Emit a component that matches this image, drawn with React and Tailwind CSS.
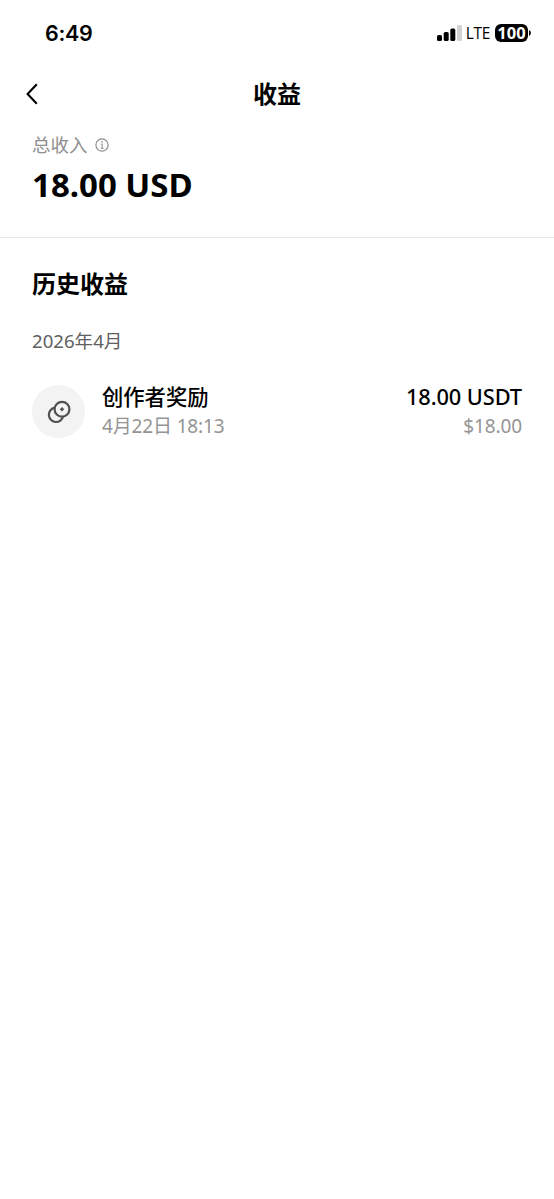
function StatusBar() {
  return (
    <div className="flex h-[66px] items-center justify-between pr-[22px] pl-[45px] font-['Inter',sans-serif]">
      <span className="pt-[2px] text-[21.5px] leading-none font-semibold tracking-[-0.3px]">6:49</span>
      <div className="flex items-center">
        <svg width="25" height="16" viewBox="0 0 25 16" className="mr-[4px]">
          <rect x="0" y="10" width="5" height="6" rx="1.6" />
          <rect x="6.7" y="7" width="5" height="9" rx="1.6" />
          <rect x="13.3" y="3.5" width="5" height="12.5" rx="1.6" />
          <rect x="20" y="0" width="5" height="16" rx="1.6" fill="#d2d2d2" />
        </svg>
        <span className="mr-[5px] pt-[2px] font-['Open_Sans',sans-serif] text-[15.5px] leading-none font-medium tracking-[-0.3px]">LTE</span>
        <span className="flex h-[18px] w-[33px] items-center justify-center rounded-[6px] bg-black font-['Open_Sans',sans-serif] text-[16.5px] leading-none font-bold text-white">
          100
        </span>
        <svg width="4" height="6" viewBox="0 0 4 6">
          <path d="M1 0A3.3 3.3 0 0 1 1 6Z" />
        </svg>
      </div>
    </div>
  );
}

function Header() {
  return (
    <header className="grid h-[56px] grid-cols-[1fr_auto_1fr] items-center px-[26px]">
      <svg width="13" height="22" viewBox="0 0 13 22" fill="none" stroke="#000" strokeWidth="2.1">
        <path d="M10.8 1.3 1.6 11l9.2 9.7" />
      </svg>
      <h1 className="text-[24px] leading-none font-bold">收益</h1>
    </header>
  );
}

function Summary() {
  return (
    <section className="h-[116px] border-b border-[#e6e6e6] px-[32px] pt-[11px]">
      <div className="flex h-[24px] items-center gap-[7px] text-[#8f8f8f]">
        <span className="text-[18.5px] leading-none">总收入</span>
        <svg width="14" height="14" viewBox="0 0 14 14" fill="none" stroke="currentColor" strokeWidth="1.2">
          <circle cx="7" cy="7" r="6.1" />
          <path d="M5.8 6.1H7.2v4.3M5.8 10.2h2.8" strokeWidth="1" />
          <circle cx="7" cy="3.9" r=".8" fill="currentColor" stroke="none" />
        </svg>
      </div>
      <div className="mt-[8px] text-[33px] leading-[40px] font-bold whitespace-nowrap">18.00 USD</div>
    </section>
  );
}

function Entry() {
  return (
    <div className="flex items-center">
      <div className="mt-px flex size-[53px] shrink-0 items-center justify-center rounded-full bg-[#f3f3f3]">
        <svg width="24" height="24" viewBox="0 0 24 24" fill="none" stroke="#505050" strokeWidth="2.2">
          <circle cx="15" cy="9.2" r="7.4" />
          <path d="M7.9 7.7A7.2 7.2 0 1 0 16.1 16.3" />
          <path d="M15 7 17.2 9.2 15 11.4 12.8 9.2Z" fill="#505050" stroke="none" />
        </svg>
      </div>
      <div className="ml-[17px] flex-1">
        <div className="text-[21.3px] leading-[30px] font-medium">创作者奖励</div>
        <div className="text-[19px] leading-[28px] tracking-[-0.15px] text-[#949494]">4月22日 18:13</div>
      </div>
      <div className="text-right">
        <div className="text-[21.8px] leading-[30px] font-medium tracking-[-0.1px]">18.00 USDT</div>
        <div className="text-[19px] leading-[28px] tracking-[-0.1px] text-[#949494]">$18.00</div>
      </div>
    </div>
  );
}

export default function App() {
  return (
    <main className="min-h-[1199px] w-full bg-white font-['Noto_Sans','Noto_Sans_CJK_SC',sans-serif] text-black">
      <StatusBar />
      <Header />
      <Summary />
      <section className="px-[32px] pt-[30px]">
        <h2 className="text-[24px] leading-[32px] font-bold">历史收益</h2>
        <div className="mt-[27px] text-[18.6px] leading-[28px] text-[#606060]">2026年4月</div>
        <div className="mt-[27px]">
          <Entry />
        </div>
      </section>
    </main>
  );
}
